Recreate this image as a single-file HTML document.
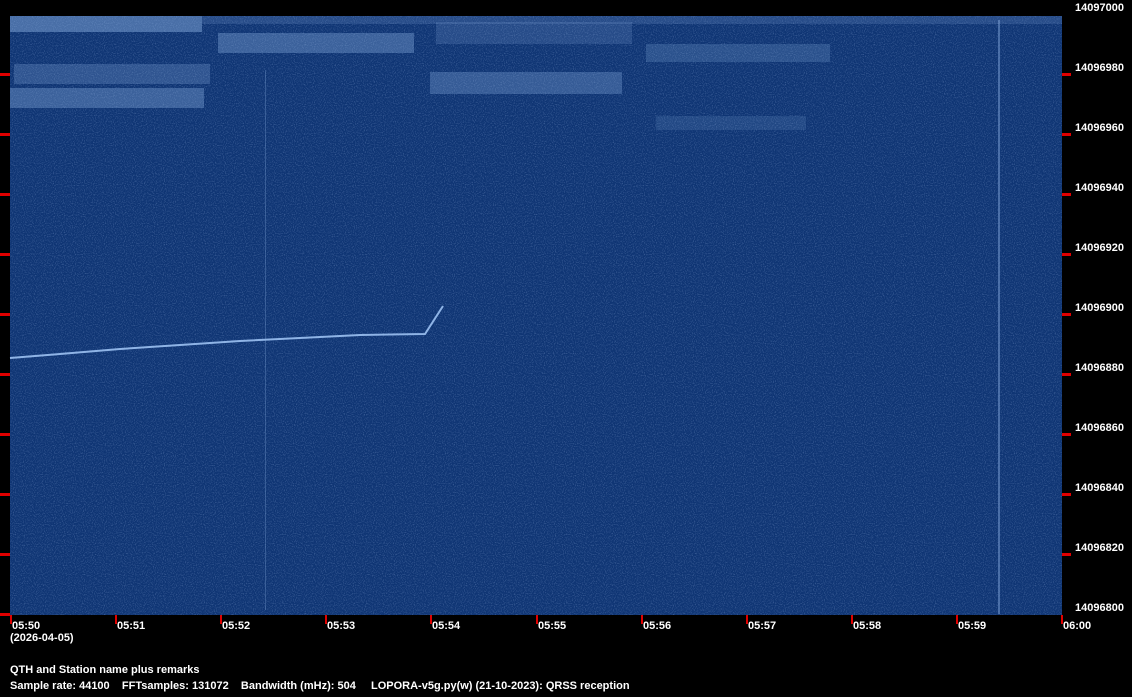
<!DOCTYPE html>
<html><head><style>
html,body{margin:0;padding:0;background:#000;width:1132px;height:697px;overflow:hidden}
svg{display:block}
text{font-family:"Liberation Sans",sans-serif;font-weight:bold;font-size:11px;fill:#fff}
</style></head><body>
<svg width="1132" height="697" xmlns="http://www.w3.org/2000/svg">
<defs>
<filter id="n" x="0" y="0" width="100%" height="100%">
<feTurbulence type="fractalNoise" baseFrequency="0.9" numOctaves="1" seed="3"/>
<feColorMatrix values="0 0 0 0 0.45  0 0 0 0 0.6  0 0 0 0 0.9  0 0 0 1.6 -0.75"/>
</filter>
</defs>
<rect x="10" y="16" width="1052" height="599" fill="#0f3574"/>
<rect x="10" y="16" width="1052" height="599" filter="url(#n)" opacity="0.5"/>
<g fill="#8fb4e4">
<rect x="10" y="16" width="192" height="16" opacity="0.45"/>
<rect x="202" y="16" width="860" height="8" opacity="0.18"/>
<rect x="218" y="33" width="196" height="20" opacity="0.35"/>
<rect x="436" y="22" width="196" height="22" opacity="0.18"/>
<rect x="646" y="44" width="184" height="18" opacity="0.22"/>
<rect x="14" y="64" width="196" height="20" opacity="0.25"/>
<rect x="10" y="88" width="194" height="20" opacity="0.35"/>
<rect x="430" y="72" width="192" height="22" opacity="0.3"/>
<rect x="656" y="116" width="150" height="14" opacity="0.15"/>
</g>
<rect x="265" y="70" width="1" height="540" fill="#6f94c8" opacity="0.4"/>
<rect x="998" y="20" width="2" height="594" fill="#7fa4d8" opacity="0.5"/>
<polyline points="10,358 60,354 120,349 180,345 240,341 300,338 360,335 425,334 443,306" fill="none" stroke="#8fb4e6" stroke-width="2"/>
<g fill="#e00000">
<rect x="0" y="73" width="10" height="3"/><rect x="0" y="133" width="10" height="3"/><rect x="0" y="193" width="10" height="3"/><rect x="0" y="253" width="10" height="3"/><rect x="0" y="313" width="10" height="3"/><rect x="0" y="373" width="10" height="3"/><rect x="0" y="433" width="10" height="3"/><rect x="0" y="493" width="10" height="3"/><rect x="0" y="553" width="10" height="3"/><rect x="0" y="613" width="10" height="3"/>
<rect x="1062" y="73" width="9" height="3"/><rect x="1062" y="133" width="9" height="3"/><rect x="1062" y="193" width="9" height="3"/><rect x="1062" y="253" width="9" height="3"/><rect x="1062" y="313" width="9" height="3"/><rect x="1062" y="373" width="9" height="3"/><rect x="1062" y="433" width="9" height="3"/><rect x="1062" y="493" width="9" height="3"/><rect x="1062" y="553" width="9" height="3"/>
<rect x="10" y="615" width="2" height="9"/><rect x="115" y="615" width="2" height="9"/><rect x="220" y="615" width="2" height="9"/><rect x="325" y="615" width="2" height="9"/><rect x="430" y="615" width="2" height="9"/><rect x="536" y="615" width="2" height="9"/><rect x="641" y="615" width="2" height="9"/><rect x="746" y="615" width="2" height="9"/><rect x="851" y="615" width="2" height="9"/><rect x="956" y="615" width="2" height="9"/><rect x="1061" y="615" width="2" height="9"/>
</g>
<g>
<text x="1075" y="11">14097000</text>
<text x="1075" y="71">14096980</text>
<text x="1075" y="131">14096960</text>
<text x="1075" y="191">14096940</text>
<text x="1075" y="251">14096920</text>
<text x="1075" y="311">14096900</text>
<text x="1075" y="371">14096880</text>
<text x="1075" y="431">14096860</text>
<text x="1075" y="491">14096840</text>
<text x="1075" y="551">14096820</text>
<text x="1075" y="611">14096800</text>
<text x="12" y="629">05:50</text>
<text x="117" y="629">05:51</text>
<text x="222" y="629">05:52</text>
<text x="327" y="629">05:53</text>
<text x="432" y="629">05:54</text>
<text x="538" y="629">05:55</text>
<text x="643" y="629">05:56</text>
<text x="748" y="629">05:57</text>
<text x="853" y="629">05:58</text>
<text x="958" y="629">05:59</text>
<text x="1063" y="629">06:00</text>
<text x="10" y="641">(2026-04-05)</text>
<text x="10" y="673">QTH and Station name plus remarks</text>
<text x="10" y="689" xml:space="preserve">Sample rate: 44100    FFTsamples: 131072    Bandwidth (mHz): 504</text>
<text x="371" y="689">LOPORA-v5g.py(w) (21-10-2023): QRSS reception</text>
</g>
</svg>
</body></html>
